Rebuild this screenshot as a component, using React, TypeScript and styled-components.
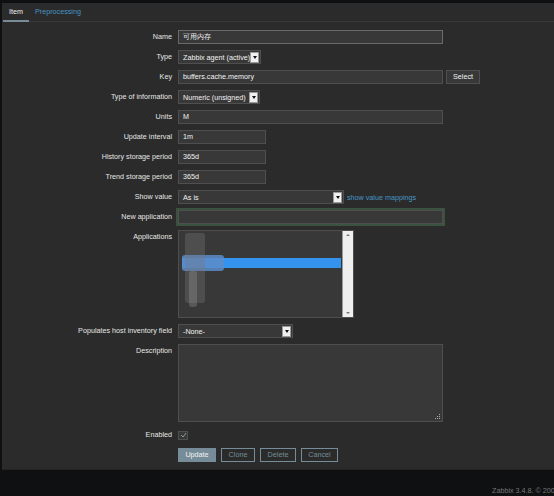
import React from "react";
import styled, { createGlobalStyle } from "styled-components";

const Global = createGlobalStyle`
  html, body { margin: 0; padding: 0; background: #0e1012; overflow: hidden; }
  body { font-family: "Liberation Sans", Arial, sans-serif; font-size: 7.2px; color: #f2f2f2; }
  * { box-sizing: border-box; }
`;

const Page = styled.div`
  width: 554px;
  height: 496px;
  display: flex;
  flex-direction: column;
  padding-top: 3px;
  padding-left: 2px;
`;

const Panel = styled.div`
  height: 467px;
  background: #2b2b2b;
  border-bottom: 1px solid #242424;
  display: flex;
  flex-direction: column;
`;

const TabBar = styled.div`
  height: 19px;
  display: flex;
  align-items: stretch;
  border-bottom: 1px solid #383838;
  padding-left: 1px;
`;

const Tab = styled.div<{ $active?: boolean }>`
  display: flex;
  align-items: center;
  padding: 0 6px;
  color: ${(p) => (p.$active ? "#f2f2f2" : "#4796c4")};
  border-bottom: 2px solid ${(p) => (p.$active ? "#768d99" : "transparent")};
  margin-bottom: -1px;
`;

const Form = styled.div`
  display: grid;
  grid-template-columns: 170px 1fr;
  column-gap: 6px;
  row-gap: 6px;
  padding-top: 8px;
`;

const Label = styled.div`
  text-align: right;
  line-height: 14px;
  height: 14px;
  color: #e6e6e6;
  white-space: nowrap;
`;

const Field = styled.div`
  display: flex;
  align-items: center;
  gap: 3px;
  min-height: 14px;
`;

const Input = styled.div<{ $w: number; $hl?: boolean; $glow?: boolean }>`
  width: ${(p) => p.$w}px;
  height: 14px;
  line-height: 12px;
  padding: 0 4px;
  background: #383838;
  border: 1px solid ${(p) => (p.$hl ? "#6a6a6a" : "#4f4f4f")};
  color: #f2f2f2;
  white-space: nowrap;
  box-shadow: ${(p) => (p.$glow ? "0 0 0 2px rgba(80,130,90,0.45)" : "none")};
`;

const SelectBox = styled.div<{ $w: number }>`
  width: ${(p) => p.$w}px;
  height: 14px;
  padding: 0 1px 0 4px;
  background: #383838;
  border: 1px solid #4f4f4f;
  display: flex;
  align-items: center;
  justify-content: space-between;
  white-space: nowrap;
`;

const Arrow = styled.div`
  width: 9px;
  height: 11px;
  background: #f0f0f0;
  border: 1px solid #9a9a9a;
  display: flex;
  align-items: center;
  justify-content: center;
  &::after {
    content: "";
    border-left: 2.5px solid transparent;
    border-right: 2.5px solid transparent;
    border-top: 3px solid #111;
  }
`;

const Link = styled.span`
  color: #4796c4;
`;

const SmallBtn = styled.div`
  height: 14px;
  width: 34px;
  line-height: 12px;
  text-align: center;
  background: #383838;
  border: 1px solid #4f4f4f;
  color: #f2f2f2;
`;

const ListBox = styled.div`
  position: relative;
  width: 176px;
  height: 88px;
  background: #383838;
  border: 1px solid #4f4f4f;
  display: flex;
  overflow: hidden;
`;

const ListArea = styled.div`
  flex: 1;
  position: relative;
  padding-top: 27px;
  padding-left: 3px;
`;

const SelectedBar = styled.div`
  height: 10px;
  background: #3593f0;
  margin-right: 1px;
`;

const Blob = styled.div`
  position: absolute;
  border-radius: 3px;
`;

const Scroll = styled.div`
  width: 11px;
  background: #efefef;
  display: flex;
  flex-direction: column;
  justify-content: space-between;
  align-items: center;
  padding: 3px 0;
  border-left: 1px solid #9a9a9a;
`;

const ScrollArrow = styled.div<{ $down?: boolean }>`
  border-left: 2px solid transparent;
  border-right: 2px solid transparent;
  ${(p) => (p.$down ? "border-top: 2px solid #777;" : "border-bottom: 2px solid #777;")}
`;

const TextArea = styled.div`
  position: relative;
  width: 265px;
  height: 78px;
  background: #383838;
  border: 1px solid #4f4f4f;
`;

const Grip = styled.svg`
  position: absolute;
  right: 2px;
  bottom: 2px;
`;

const Check = styled.div`
  width: 10px;
  height: 9px;
  background: #383838;
  border: 1px solid #4f4f4f;
  display: flex;
  align-items: center;
  justify-content: center;
`;

const Buttons = styled.div`
  display: flex;
  gap: 5px;
`;

const Btn = styled.div<{ $primary?: boolean; $w: number }>`
  width: ${(p) => p.$w}px;
  height: 14px;
  line-height: 12px;
  text-align: center;
  border: 1px solid #768d99;
  background: ${(p) => (p.$primary ? "#768d99" : "transparent")};
  color: ${(p) => (p.$primary ? "#f2f2f2" : "#768d99")};
`;

const Footer = styled.div`
  flex: 1;
  display: flex;
  align-items: flex-end;
  padding-left: 490px;
  padding-bottom: 1px;
  color: #777;
  white-space: nowrap;
`;

const Select = ({ w, v }: { w: number; v: string }) => (
  <SelectBox $w={w}>
    <span>{v}</span>
    <Arrow />
  </SelectBox>
);

export default function App() {
  return (
    <>
      <Global />
      <Page>
        <Panel>
          <TabBar>
            <Tab $active>Item</Tab>
            <Tab>Preprocessing</Tab>
          </TabBar>
          <Form>
            <Label>Name</Label>
            <Field>
              <Input $w={265} $hl>
                可用内存
              </Input>
            </Field>

            <Label>Type</Label>
            <Field>
              <Select w={83} v="Zabbix agent (active)" />
            </Field>

            <Label>Key</Label>
            <Field>
              <Input $w={265}>buffers.cache.memory</Input>
              <SmallBtn>Select</SmallBtn>
            </Field>

            <Label>Type of information</Label>
            <Field>
              <Select w={82} v="Numeric (unsigned)" />
            </Field>

            <Label>Units</Label>
            <Field>
              <Input $w={265}>M</Input>
            </Field>

            <Label>Update interval</Label>
            <Field>
              <Input $w={88}>1m</Input>
            </Field>

            <Label>History storage period</Label>
            <Field>
              <Input $w={88}>365d</Input>
            </Field>

            <Label>Trend storage period</Label>
            <Field>
              <Input $w={88}>365d</Input>
            </Field>

            <Label>Show value</Label>
            <Field>
              <Select w={166} v="As is" />
              <Link>show value mappings</Link>
            </Field>

            <Label>New application</Label>
            <Field>
              <Input $w={265} $glow />
            </Field>

            <Label>Applications</Label>
            <Field>
              <ListBox>
                <ListArea>
                  <SelectedBar />
                  <Blob style={{ left: 3, top: 24, width: 42, height: 16, background: "rgba(90,140,200,0.85)" }} />
                  <Blob style={{ left: 6, top: 2, width: 20, height: 70, background: "rgba(120,120,120,0.35)" }} />
                  <Blob style={{ left: 10, top: 40, width: 8, height: 36, background: "rgba(150,150,150,0.35)" }} />
                </ListArea>
                <Scroll>
                  <ScrollArrow />
                  <ScrollArrow $down />
                </Scroll>
              </ListBox>
            </Field>

            <Label>Populates host inventory field</Label>
            <Field>
              <Select w={115} v="-None-" />
            </Field>

            <Label>Description</Label>
            <Field>
              <TextArea>
                <Grip width="5" height="5" viewBox="0 0 5 5">
                  <rect x="4" y="0" width="1" height="1" fill="#aaa" />
                  <rect x="2" y="2" width="1" height="1" fill="#aaa" />
                  <rect x="4" y="2" width="1" height="1" fill="#aaa" />
                  <rect x="0" y="4" width="1" height="1" fill="#aaa" />
                  <rect x="2" y="4" width="1" height="1" fill="#aaa" />
                  <rect x="4" y="4" width="1" height="1" fill="#aaa" />
                </Grip>
              </TextArea>
            </Field>

            <Label>Enabled</Label>
            <Field>
              <Check>
                <svg width="7" height="6" viewBox="0 0 7 6">
                  <path d="M1 3 L3 5 L6 1" fill="none" stroke="#8a9aa4" strokeWidth="1" />
                </svg>
              </Check>
            </Field>

            <div />
            <Buttons>
              <Btn $primary $w={38}>Update</Btn>
              <Btn $w={34}>Clone</Btn>
              <Btn $w={36}>Delete</Btn>
              <Btn $w={37}>Cancel</Btn>
            </Buttons>
          </Form>
        </Panel>
        <Footer>Zabbix 3.4.8. © 2001–2018, Zabbix SIA</Footer>
      </Page>
    </>
  );
}
